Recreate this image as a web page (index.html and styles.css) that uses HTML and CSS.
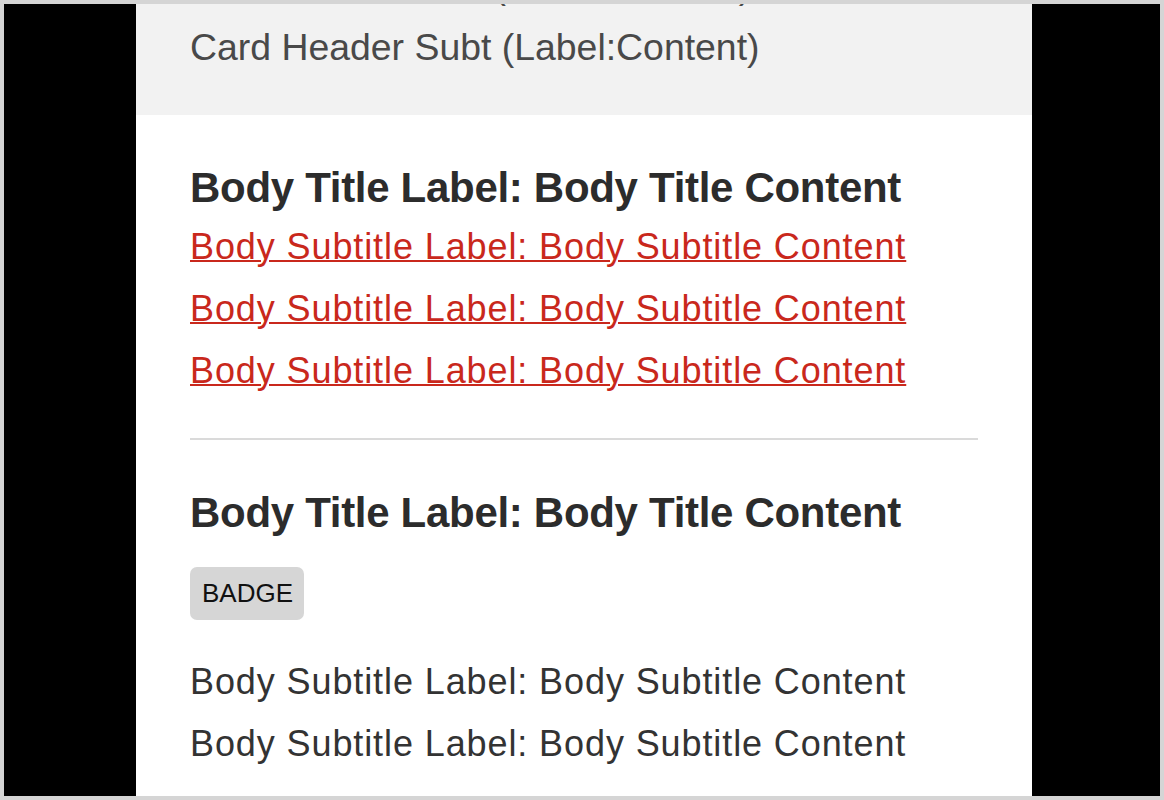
FILE: index.html
```html
<!DOCTYPE html>
<html lang="en">
<head>
<meta charset="utf-8">
<title>Card</title>
<link rel="stylesheet" href="styles.css">
</head>
<body>
<div class="frame">
  <div class="card">
    <div class="card-header">
      <div class="header-title">Card Header Title (Label:Content)</div>
      <div class="header-subtitle">Card Header Subt (Label:Content)</div>
    </div>
    <div class="card-body">
      <div class="section">
        <div class="body-title">Body Title Label: Body Title Content</div>
        <a class="body-link" href="#">Body Subtitle Label: Body Subtitle Content</a>
        <a class="body-link" href="#">Body Subtitle Label: Body Subtitle Content</a>
        <a class="body-link" href="#">Body Subtitle Label: Body Subtitle Content</a>
      </div>
      <hr class="divider">
      <div class="section">
        <div class="body-title">Body Title Label: Body Title Content</div>
        <div class="badge-row"><span class="badge">BADGE</span></div>
        <div class="body-text">Body Subtitle Label: Body Subtitle Content</div>
        <div class="body-text">Body Subtitle Label: Body Subtitle Content</div>
      </div>
    </div>
  </div>
</div>
</body>
</html>
```
FILE: styles.css
```css
html, body {
  margin: 0;
  padding: 0;
}

body {
  font-family: "Liberation Sans", Arial, sans-serif;
}

.frame {
  width: 1164px;
  height: 800px;
  box-sizing: border-box;
  border: 4px solid #d5d5d5;
  background: #000;
  display: flex;
  justify-content: flex-start;
  padding-left: 132px;
  overflow: hidden;
}

.card {
  width: 896px;
  flex-shrink: 0;
  background: #fff;
  margin-top: -50px;
  display: flex;
  flex-direction: column;
}

.card-header {
  background: #f2f2f2;
  padding: 0 54px 37px;
}

.header-title,
.header-subtitle {
  font-size: 37.4px;
  line-height: 62px;
  color: #494949;
  white-space: nowrap;
}

.card-body {
  padding: 48px 54px 0;
}

.section {
  display: flex;
  flex-direction: column;
  align-items: flex-start;
}

.body-title {
  font-size: 42px;
  font-weight: bold;
  letter-spacing: -0.3px;
  line-height: 50px;
  color: #2c2c2c;
  margin-bottom: 3px;
  white-space: nowrap;
}

.body-link,
.body-text {
  font-size: 36px;
  letter-spacing: 0.9px;
  line-height: 62px;
  white-space: nowrap;
}

.body-link {
  color: #c9281c;
  text-decoration: underline;
  text-decoration-thickness: 2px;
  text-underline-offset: 1px;
}

.body-text {
  color: #333;
}

.divider {
  border: 0;
  border-top: 2px solid #dadada;
  margin: 36px 0 48px;
  height: 0;
}

.badge-row {
  margin: 26px 0 31px;
}

.badge {
  display: inline-flex;
  align-items: center;
  height: 53px;
  padding: 0 11px 0 12px;
  box-sizing: border-box;
  background: #d6d6d6;
  border-radius: 7px;
  font-size: 26px;
  color: #111;
}
```
